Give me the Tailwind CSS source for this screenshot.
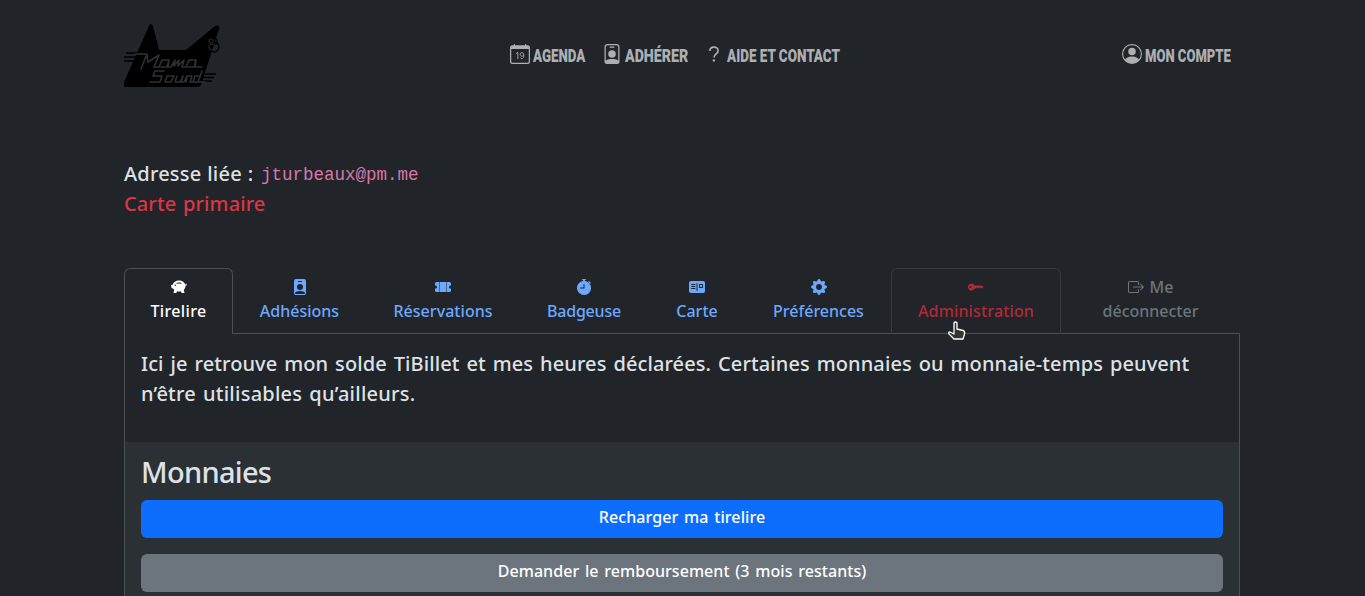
<!DOCTYPE html>
<html lang="fr">
<head>
<meta charset="utf-8">
<title>Mon compte</title>
<script src="https://cdn.jsdelivr.net/npm/@tailwindcss/browser@4"></script>
</head>
<body class="h-[596px] overflow-hidden bg-[#212529] text-[#dee2e6] font-['Noto_Sans',sans-serif]">
<header class="ml-[124px] flex h-[110px] w-[1116px] items-start">
  <svg class="mt-[23px] h-16 w-[98px] shrink-0" viewBox="2 0 98 64">
    <path d="M2 59L27 3Q29 -1 31 3L37 27H64L93 3Q98 1 97 6L79 62Q78 64 75 64H4Q1 64 2 59Z"/>
    <g fill="none" stroke="#000" stroke-width="1.3"><path d="M4 30H17M2 34H16M1 38H14M76 51H94M75 54.500H92M74 58H90"/><circle cx="91" cy="18" r="4"/><circle cx="92" cy="24" r="5"/></g>
    <g fill="none" stroke="#212529" stroke-width="1.2"><circle cx="90" cy="24" r="3"/><circle cx="89" cy="18" r="2"/></g>
    <g fill="none" stroke="#2b3035" stroke-width="1.6" stroke-linejoin="round" stroke-linecap="round">
      <path d="M14 31H25L19 46M25 31L26 39L37 32L32 44H37L40 37H47L45 44H39M47 37L46 44H49L53 37L52 43L57 37L56 43L62 37L60 44H64L67 37H74L72 44H66M74 37L73 44H80"/>
      <path d="M42 48H33L31 53H40L38 59H28M45 53H52L49 59H43ZM55 53L53 59H58L61 53L59 59H62L65 53L64 59M65 53H70L68 59H71M80 48L76 59H71L73 53H78M76 59H83"/>
    </g>
  </svg>
  <nav class="mt-11 ml-[288px] flex h-6 items-start text-[19.2px]/[23px] font-bold whitespace-nowrap text-[#adb0b3] font-['Roboto',sans-serif]">
    <svg class="h-5 w-5 shrink-0" viewBox="0 0 16 16" fill="currentColor"><path fill-rule="evenodd" d="M3.500 0a.5.5 0 0 1 .5.5V1h8V.5a.5.5 0 0 1 1 0V1h1a2 2 0 0 1 2 2v11a2 2 0 0 1-2 2H2a2 2 0 0 1-2-2V3a2 2 0 0 1 2-2h1V.5a.5.5 0 0 1 .5-.5M1 4v10a1 1 0 0 0 1 1h12a1 1 0 0 0 1-1V4z"/><path fill="none" stroke="currentColor" stroke-width=".7" d="M4.900 7.700L6.300 6.700V12M8.300 10.900C8.700 12.100 11.100 12.200 11.100 9.300C11.100 6.200 8.200 6.200 8.200 8.300C8.200 10.100 10.500 10.200 11 8.800"/></svg>
    <span class="ml-[3px] w-[69px]"><b class="inline-block origin-left scale-x-[.695]">AGENDA</b></span>
    <svg class="h-5 w-5 shrink-0" viewBox="0 0 16 16" fill="currentColor"><path d="M6.500 2a.5.5 0 0 0 0 1h3a.5.5 0 0 0 0-1zM11 8a3 3 0 1 1-6 0 3 3 0 0 1 6 0"/><path d="M4.500 0A2.500 2.500 0 0 0 2 2.500V14a2 2 0 0 0 2 2h8a2 2 0 0 0 2-2V2.500A2.500 2.500 0 0 0 11.500 0zM3 2.500A1.500 1.500 0 0 1 4.500 1h7A1.500 1.500 0 0 1 13 2.500v10.795a4.200 4.200 0 0 0-.776-.492C11.392 12.387 10.063 12 8 12s-3.392.387-4.224.803a4.200 4.200 0 0 0-.776.492z"/></svg>
    <span class="ml-[3px] w-[79px]"><b class="inline-block origin-left scale-x-[.74]">ADHÉRER</b></span>
    <svg class="h-5 w-5 shrink-0" viewBox="0 0 16 16" fill="none" stroke="currentColor" stroke-width="1.300"><path d="M4.700 5.600C4.600 1.500 11.300 1.500 11.300 5.200C11.300 8 8 7.700 8 10.800"/><circle cx="7.900" cy="13.100" r=".95" fill="currentColor" stroke="none"/></svg>
    <span class="ml-[3px] w-[113px]"><b class="inline-block origin-left scale-x-[.7]">AIDE ET CONTACT</b></span>
  </nav>
  <div class="mt-11 ml-auto flex h-6 w-[118px] text-[19.2px]/[23px] font-bold text-[#adb0b3] font-['Roboto',sans-serif]">
    <svg class="h-5 w-5 shrink-0" viewBox="0 0 16 16" fill="currentColor"><path d="M11 6a3 3 0 1 1-6 0 3 3 0 0 1 6 0"/><path fill-rule="evenodd" d="M0 8a8 8 0 1 1 16 0A8 8 0 0 1 0 8m8-7a7 7 0 0 0-5.468 11.370C3.242 11.226 4.805 10 8 10s4.757 1.225 5.468 2.370A7 7 0 0 0 8 1"/></svg>
    <span class="ml-[3px] whitespace-nowrap"><b class="inline-block origin-left scale-x-[.68]">MON COMPTE</b></span>
  </div>
</header>
<main class="ml-[124px] w-[1116px] pt-[49px] text-xl/[30px] font-medium">
  <p class="flex h-[30px]"><span class="w-[137px] tracking-[.2px] [word-spacing:.5px]">Adresse liée :</span><code class="pt-px text-[17.5px]/[30px] font-normal text-[#d977a8] font-['Liberation_Mono',monospace]">jturbeaux@pm.me</code></p>
  <p class="tracking-[.1px] text-[#dc3545] [word-spacing:1.5px]">Carte primaire</p>

  <ul class="mt-[49px] flex h-[66px] text-center text-base/6 text-[#6ea8fe] [&>li]:flex [&>li]:flex-col [&>li]:items-center [&>li]:pt-[7px] [&_svg]:my-1 [&_svg]:size-4 [&_svg]:shrink-0">
    <li class="w-[109px] rounded-t-md border border-b-0 border-[#495057] text-white !pt-[6px]">
      <svg viewBox="0 0 16 16" fill="currentColor"><path fill-rule="evenodd" d="M7.964 1.527c-2.977 0-5.571 1.704-6.320 4.125h-.550A1 1 0 0 0 .110 6.824l.254 1.460a1.500 1.500 0 0 0 1.478 1.243h.263c.300.513.688.978 1.145 1.382l-.729 2.477a.5.5 0 0 0 .480.641h2a.5.5 0 0 0 .471-.332l.482-1.351c.635.173 1.310.267 2.011.267.707 0 1.388-.095 2.028-.272l.543 1.372a.5.5 0 0 0 .465.316h2a.5.5 0 0 0 .478-.645l-.761-2.506C13.810 9.895 14.500 8.559 14.500 7.069q0-.218-.020-.431c.261-.110.508-.266.705-.444.315.306.815.306.815-.417 0 .223-.500.223-.461-.026a1 1 0 0 0 .090-.255.700.700 0 0 0-.202-.645.580.580 0 0 0-.707-.098.740.740 0 0 0-.375.562c-.024.243.082.480.320.654a2 2 0 0 1-.259.153c-.534-2.664-3.284-4.595-6.442-4.595m7.173 3.876a.570.570 0 0 1-.098.210l-.044-.025c-.146-.090-.157-.175-.152-.223a.240.240 0 0 1 .117-.173c.049-.027.080-.021.113.012a.200.200 0 0 1 .064.199m-8.999-.650a.500.500 0 1 1-.276-.960A7.600 7.600 0 0 1 7.964 3.500c.763 0 1.497.110 2.180.315a.500.500 0 1 1-.287.958A6.600 6.600 0 0 0 7.964 4.500c-.640 0-1.255.090-1.826.254ZM5 6.250a.750.750 0 1 1-1.500 0 .750.750 0 0 1 1.500 0"/></svg>
      <span class="tracking-[.35px]">Tirelire</span>
    </li>
    <li class="w-[133px] border-b border-[#495057]">
      <svg viewBox="0 0 16 16" fill="currentColor"><path fill-rule="evenodd" d="M2 2a2 2 0 0 1 2-2h8a2 2 0 0 1 2 2v12a2 2 0 0 1-2 2H4a2 2 0 0 1-2-2zm4.500 0a.5.5 0 0 0 0 1h3a.5.5 0 0 0 0-1zM8 11a3 3 0 1 0 0-6 3 3 0 0 0 0 6m5 2.755C12.146 12.825 10.623 12 8 12s-4.146.826-5 1.755V14a1 1 0 0 0 1 1h8a1 1 0 0 0 1-1z"/></svg>
      <span>Adhésions</span>
    </li>
    <li class="w-[154px] border-b border-[#495057]">
      <svg viewBox="0 0 16 16" fill="currentColor"><path fill-rule="evenodd" d="M0 4.500A1.500 1.500 0 0 1 1.500 3h13A1.500 1.500 0 0 1 16 4.500V6a.5.5 0 0 1-.5.5 1.500 1.500 0 0 0 0 3 .5.5 0 0 1 .5.5v1.500a1.500 1.500 0 0 1-1.500 1.500h-13A1.500 1.500 0 0 1 0 11.500V10a.5.5 0 0 1 .5-.5 1.500 1.500 0 1 0 0-3A.5.5 0 0 1 0 6zm4-1v1h1v-1zm1 3v-1H4v1zm7 0v-1h-1v1zm-1-2h1v-1h-1zm-6 3H4v1h1zm7 1v-1h-1v1zm-7 1H4v1h1zm7 1v-1h-1v1zm-8 1v1h1v-1zm7 1h1v-1h-1z"/></svg>
      <span class="tracking-[.05px]">Réservations</span>
    </li>
    <li class="w-[128px] border-b border-[#495057]">
      <svg viewBox="0 0 16 16" fill="currentColor"><path d="M6.500 0a.5.5 0 0 0 0 1H7v1.070A7.001 7.001 0 0 0 8 16a7 7 0 0 0 5.290-11.584l.013-.012.354-.354.353.354a.5.5 0 1 0 .707-.707l-1.414-1.415a.5.5 0 1 0-.707.707l.354.354-.354.354-.012.012A6.970 6.970 0 0 0 9 2.071V1h.5a.5.5 0 0 0 0-1zm2 5.600V9a.5.5 0 0 1-.5.5H4.500a.5.5 0 0 1 0-1h3V5.600a.5.5 0 1 1 1 0"/></svg>
      <span class="tracking-[-.2px]">Badgeuse</span>
    </li>
    <li class="w-[98px] border-b border-[#495057]">
      <svg viewBox="0 0 16 16" fill="currentColor"><path d="M11 8h2V6h-2z"/><path fill-rule="evenodd" d="M0 4a2 2 0 0 1 2-2h12a2 2 0 0 1 2 2v8a2 2 0 0 1-2 2H2a2 2 0 0 1-2-2zm8.500.5a.5.5 0 0 0-1 0v7a.5.5 0 0 0 1 0zM2 5.500a.5.5 0 0 0 .5.5H6a.5.5 0 0 0 0-1H2.500a.5.5 0 0 0-.5.5m0 2a.5.5 0 0 0 .5.5H6a.5.5 0 0 0 0-1H2.500a.5.5 0 0 0-.5.5m0 2a.5.5 0 0 0 .5.5H6a.5.5 0 0 0 0-1H2.500a.5.5 0 0 0-.5.5M10.500 5a.5.5 0 0 0-.5.5v3a.5.5 0 0 0 .5.5h3a.5.5 0 0 0 .5-.5v-3a.5.5 0 0 0-.5-.5z"/></svg>
      <span>Carte</span>
    </li>
    <li class="w-[145px] border-b border-[#495057]">
      <svg viewBox="0 0 16 16" fill="currentColor"><path d="M9.405 1.050c-.413-1.400-2.397-1.400-2.810 0l-.100.340a1.464 1.464 0 0 1-2.105.872l-.310-.170c-1.283-.698-2.686.705-1.987 1.987l.169.311c.446.820.023 1.841-.872 2.105l-.340.100c-1.400.413-1.400 2.397 0 2.810l.340.100a1.464 1.464 0 0 1 .872 2.105l-.170.310c-.698 1.283.705 2.686 1.987 1.987l.311-.169a1.464 1.464 0 0 1 2.105.872l.100.340c.413 1.400 2.397 1.400 2.810 0l.100-.340a1.464 1.464 0 0 1 2.105-.872l.310.170c1.283.698 2.686-.705 1.987-1.987l-.169-.311a1.464 1.464 0 0 1 .872-2.105l.340-.100c1.400-.413 1.400-2.397 0-2.810l-.340-.100a1.464 1.464 0 0 1-.872-2.105l.170-.310c.698-1.283-.705-2.686-1.987-1.987l-.311.169a1.464 1.464 0 0 1-2.105-.872zM8 10.930a2.929 2.929 0 1 1 0-5.860 2.929 2.929 0 0 1 0 5.858z"/></svg>
      <span>Préférences</span>
    </li>
    <li class="w-[170px] rounded-t-md border border-[#343a40] border-b-[#495057] !pt-[6px] text-[#b02a37]">
      <svg viewBox="0 0 16 16" fill="currentColor"><path d="M3.500 11.500a3.500 3.500 0 1 1 3.163-5H14L15.500 8 14 9.500l-1-1-1 1-1-1-1 1-1-1-1 1H6.663a3.500 3.500 0 0 1-3.163 2M2.500 9a1 1 0 1 0 0-2 1 1 0 0 0 0 2"/></svg>
      <span class="tracking-[.15px]">Administration</span>
    </li>
    <li class="w-[179px] border-b border-[#495057] text-[#6c757d]">
      <span class="flex h-6 gap-1.5"><svg viewBox="0 0 16 16" fill="currentColor"><path fill-rule="evenodd" d="M10 12.500a.5.5 0 0 1-.5.5h-8a.5.5 0 0 1-.5-.5v-9a.5.5 0 0 1 .5-.5h8a.5.5 0 0 1 .5.5v2a.5.5 0 0 0 1 0v-2A1.500 1.500 0 0 0 9.500 2h-8A1.500 1.500 0 0 0 0 3.500v9A1.500 1.500 0 0 0 1.500 14h8a1.500 1.500 0 0 0 1.500-1.500v-2a.5.5 0 0 0-1 0z"/><path fill-rule="evenodd" d="M15.854 8.354a.5.5 0 0 0 0-.708l-3-3a.5.5 0 0 0-.708.708L14.293 7.500H5.500a.5.5 0 0 0 0 1h8.793l-2.147 2.146a.5.5 0 0 0 .708.708z"/></svg>Me</span>
      <span>déconnecter</span>
    </li>
  </ul>

  <section class="h-[262px] border-x border-[#495057]">
    <div class="h-[108px] px-4 pt-[15px] whitespace-nowrap">
      <p class="tracking-[.1px] [word-spacing:1.6px]">Ici je retrouve mon solde TiBillet et mes heures déclarées. Certaines monnaies ou monnaie-temps peuvent</p>
      <p class="tracking-[.25px] [word-spacing:1.5px]">n’être utilisables qu’ailleurs.</p>
    </div>
    <div class="flex h-[154px] flex-col bg-[#2b3035] px-4 pt-3">
      <h2 class="h-[46px] text-[29px]/[36px] tracking-[-.7px]">Monnaies</h2>
      <button class="h-[38px] shrink-0 rounded-md bg-[#0d6efd] pb-1 text-base/6 tracking-[.08px] text-white [word-spacing:1.5px]">Recharger ma tirelire</button>
      <button class="mt-4 h-[38px] shrink-0 rounded-md bg-[#6c757d] pb-1 text-base/6 tracking-[.05px] text-white [word-spacing:1.5px]">Demander le remboursement (3 mois restants)</button>
    </div>
  </section>
</main>
<svg class="absolute top-[321px] left-[947px] h-5 w-[19px]" viewBox="0 0 19 20"><path d="M7 2Q8.500 0 10 2V8L16 9.500Q18 10 17.500 13L16 18H7L2 13Q1 11 3 11L7 13Z" fill="#343434" stroke="#fff" stroke-width="1.300" stroke-linejoin="round"/></svg>
</body>
</html>
